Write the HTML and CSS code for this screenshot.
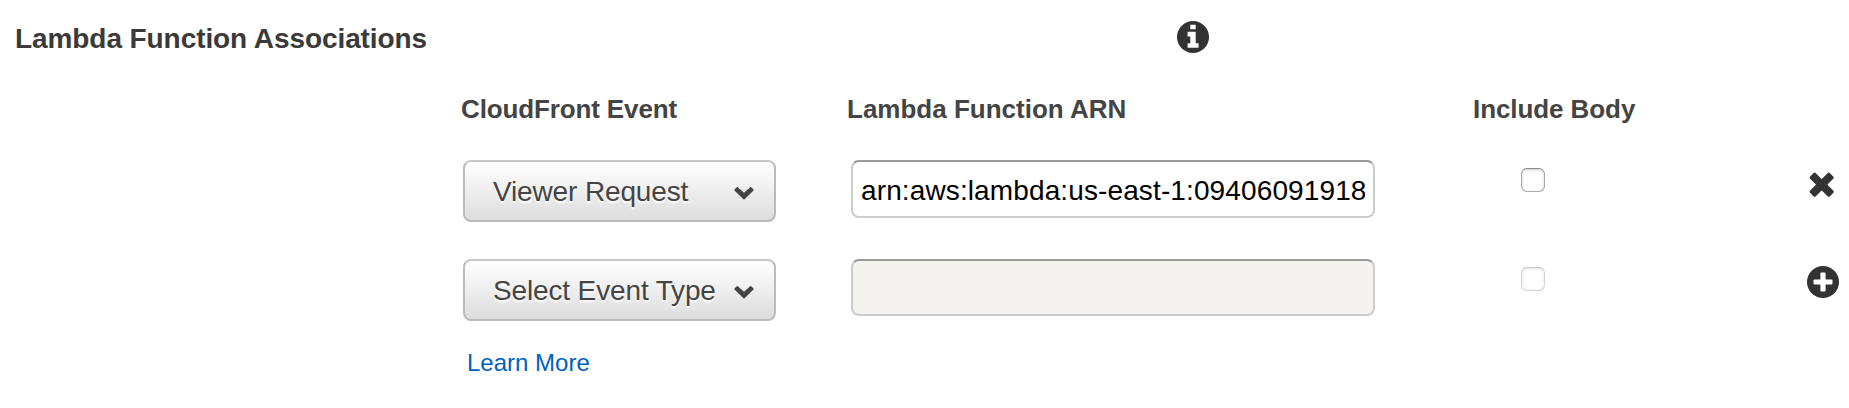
FILE: index.html
```html
<!DOCTYPE html>
<html lang="en">
<head>
<meta charset="utf-8">
<title>Lambda Function Associations</title>
<link rel="stylesheet" href="styles.css">
</head>
<body>
<header class="section-head">
  <h2 class="section-title">Lambda Function Associations</h2>
  <svg class="icon" viewBox="0 0 32 32" role="img" aria-label="Info"><circle cx="16" cy="16" r="16" fill="#333"/><path fill="#fff" d="M13.300 3.700h5.400v4.600h-5.400zM10.600 10.800h8.100v11.400h2.900v4.600h-11v-4.600h2.700v-6.800h-2.700z"/></svg>
</header>
<main class="associations">
  <div class="row labels">
    <span class="label-event">CloudFront Event</span>
    <span class="label-arn">Lambda Function ARN</span>
    <span class="label-body">Include Body</span>
  </div>
  <div class="row">
    <button class="select" type="button"><span>Viewer Request</span><svg class="chevron" viewBox="0 0 22 14"><path d="M2 4l2.300-2.300L11 7.800l6.700-6.100L20 4l-9 8.700z"/></svg></button>
    <input class="arn" type="text" value="arn:aws:lambda:us-east-1:09406091918">
    <input class="check" type="checkbox">
    <svg class="icon remove" viewBox="0 0 32 32" role="img" aria-label="Remove"><g transform="translate(15.700 15.700) rotate(45)" fill="#333"><rect x="-14" y="-4" width="28" height="8" rx="1.700"/><rect x="-4" y="-14" width="8" height="28" rx="1.700"/></g></svg>
  </div>
  <div class="row">
    <button class="select" type="button"><span>Select Event Type</span><svg class="chevron" viewBox="0 0 22 14"><path d="M2 4l2.300-2.300L11 7.800l6.700-6.100L20 4l-9 8.700z"/></svg></button>
    <input class="arn" type="text" disabled>
    <input class="check" type="checkbox" disabled>
    <svg class="icon add" viewBox="0 0 32 32" role="img" aria-label="Add"><circle cx="16" cy="16" r="16" fill="#333"/><g fill="#fff"><rect x="6.500" y="13.400" width="19" height="5.200" rx="1"/><rect x="13.400" y="6.500" width="5.200" height="19" rx="1"/></g></svg>
  </div>
  <a class="learn">Learn More</a>
</main>
</body>
</html>
```
FILE: styles.css
```css
* { box-sizing: border-box; }

body {
  margin: 0;
  background: #fff;
  color: #444;
  font-family: "Liberation Sans", Arial, sans-serif;
}

.section-head {
  display: grid;
  grid-template-columns: 1162px 32px;
  padding: 20.500px 0 0 15px;
  height: 92px;
}

.section-title {
  margin: 0;
  color: #3a3a3a;
  font-size: 28px;
  line-height: 36px;
  letter-spacing: -0.080px;
}

.icon {
  display: block;
  width: 32px;
  height: 32px;
}

.associations { padding-left: 463px; }

.row {
  display: grid;
  grid-template-columns: 313px 524px 24px 32px;
  column-gap: 75px;
  align-items: start;
  height: 99px;
}

.row > :nth-child(3) { margin-left: 71px; }
.row > :nth-child(4) { margin-left: 257px; }

.row.labels {
  height: 68px;
  font-size: 26px;
  font-weight: bold;
  line-height: 34px;
  white-space: nowrap;
}

.labels > .label-event { margin-left: -2px; letter-spacing: -0.130px; }
.labels > .label-arn { margin-left: -4px; }
.labels > .label-body { margin-left: 23px; letter-spacing: -0.080px; }

.select {
  display: flex;
  justify-content: space-between;
  align-items: center;
  width: 313px;
  height: 62px;
  padding: 2px 19px 0 28px;
  border: 2px solid #bbb;
  border-top-color: #c8c8c8;
  border-radius: 8px;
  background: linear-gradient(#fff, #ddd);
  color: #444;
  font: 28px "Liberation Sans", Arial, sans-serif;
  letter-spacing: -0.140px;
  text-shadow: 0 2px 2px #fff;
}

.chevron {
  width: 22px;
  height: 14px;
  margin-top: 2px;
  fill: #444;
  stroke: #444;
  stroke-width: 1.500;
  stroke-linejoin: round;
}

.arn {
  width: 524px;
  height: 58px;
  padding: 4px 8px 0;
  border: 2px solid #ccc;
  border-top-color: #999;
  border-radius: 8px;
  background: #fff;
  color: #000;
  font: 28px "Liberation Sans", Arial, sans-serif;
  letter-spacing: 0.120px;
}

.arn:disabled {
  height: 57px;
  background: #f4f3ef;
}

.check {
  appearance: none;
  width: 24px;
  height: 24px;
  margin: 8px 0 0;
  border: 1px solid #aaa;
  border-top-color: #8c8c8c;
  border-radius: 6px;
  background: #fff;
  box-shadow: inset 0 1px 3px #ccc;
}

.check:disabled { opacity: 0.5; }

.remove { margin-top: 9px; }

.row > .add {
  margin-top: 6.500px;
  margin-left: 258px;
}

.learn {
  display: block;
  margin: -10px 0 0 4px;
  color: #0060c0;
  font-size: 24px;
  line-height: 30px;
}
```
